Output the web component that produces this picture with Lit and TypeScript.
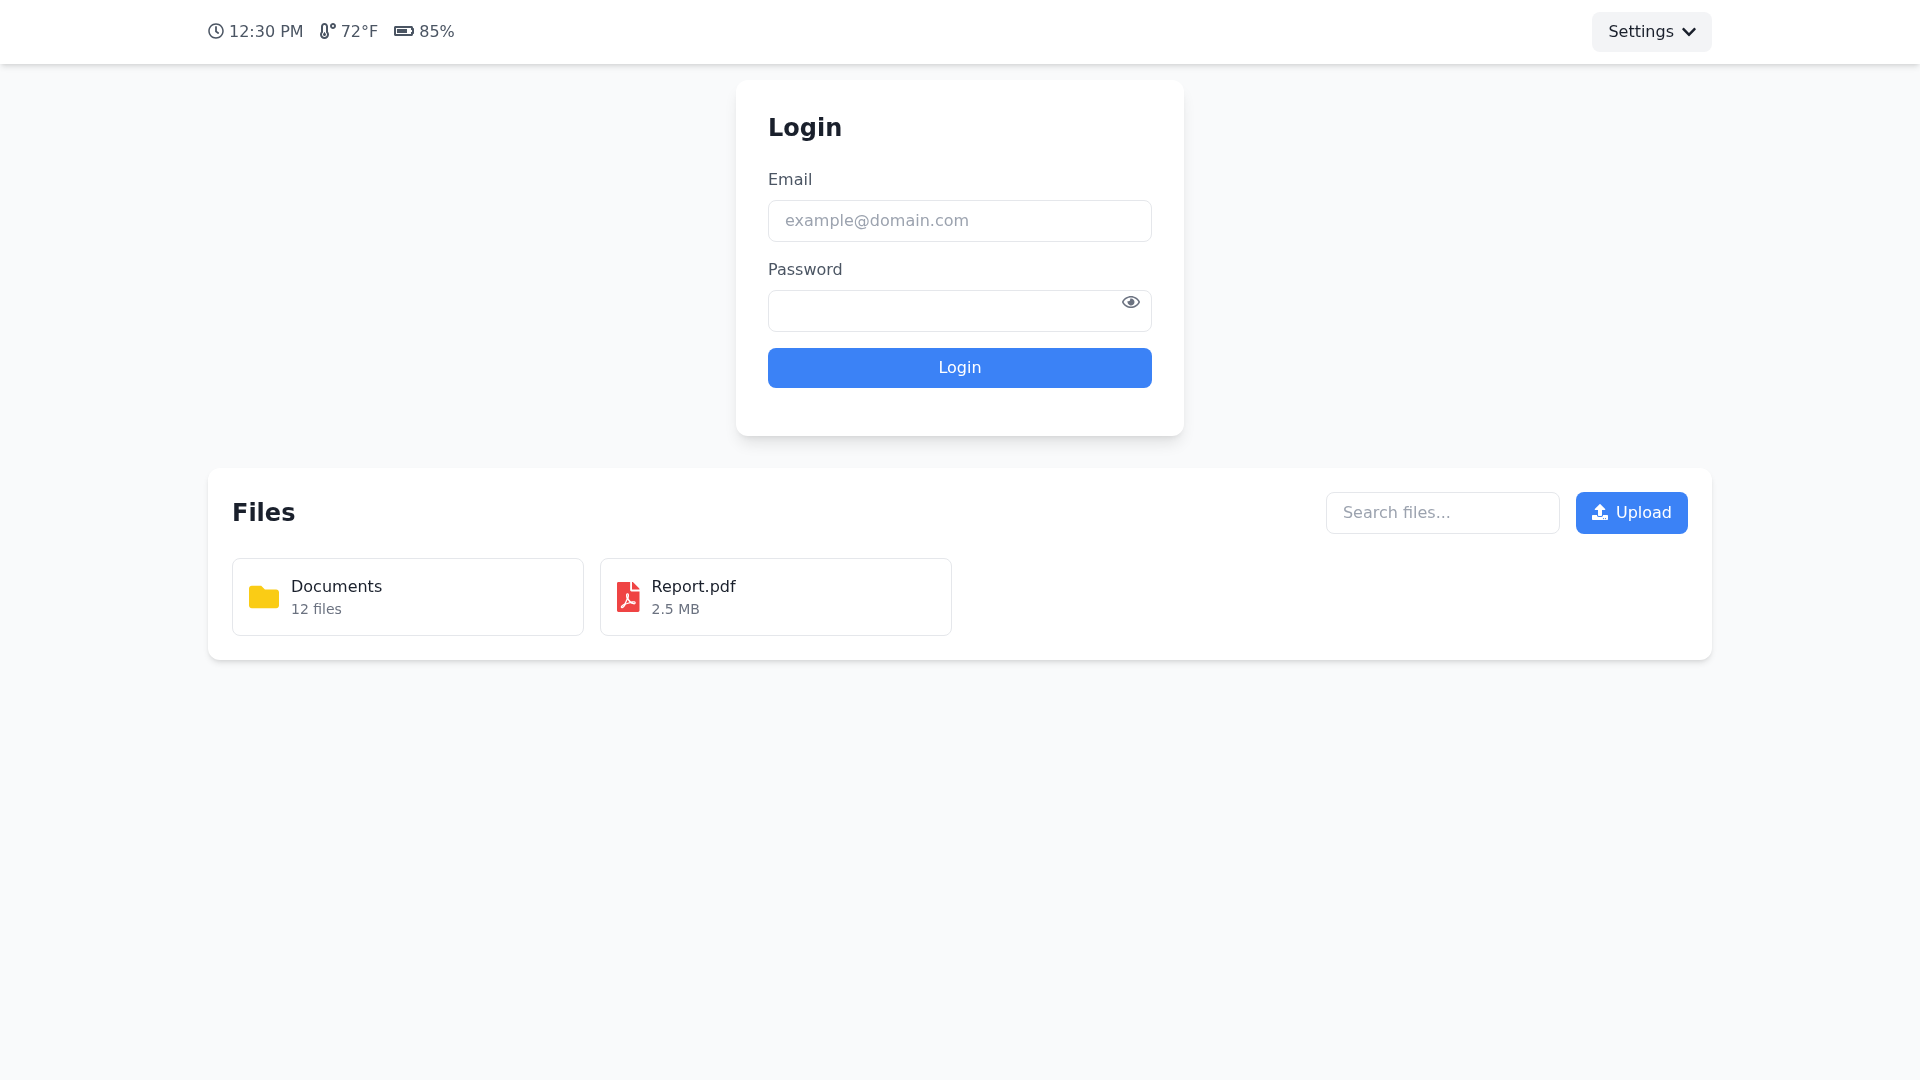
import { LitElement, html, css, svg } from "lit";
import { customElement } from "lit/decorators.js";

// Solid glyphs, all drawn with fill="currentColor"
const icon = (w: number, d: string, cls = "icon") => html`
  <svg class=${cls} viewBox="0 0 ${w} 512" style="width:${(w / 512) * 16}px" aria-hidden="true">
    ${svg`<path fill="currentColor" d=${d}></path>`}
  </svg>
`;

const CLOCK = "M256 8C119 8 8 119 8 256s111 248 248 248 248-111 248-248S393 8 256 8zm0 448c-110.500 0-200-89.500-200-200S145.500 56 256 56s200 89.500 200 200-89.500 200-200 200zm61.800-104.400l-84.900-61.700c-3.100-2.300-4.900-5.900-4.900-9.700V116c0-6.600 5.400-12 12-12h32c6.600 0 12 5.400 12 12v141.700l66.800 48.600c5.400 3.900 6.500 11.400 2.600 16.800L334.600 349c-3.900 5.300-11.400 6.500-16.800 2.600z";
const TEMP = "M416 0c-52.900 0-96 43.100-96 96s43.100 96 96 96 96-43.100 96-96-43.100-96-96-96zm0 128c-17.700 0-32-14.300-32-32s14.300-32 32-32 32 14.300 32 32-14.300 32-32 32zm-160-16C256 50.100 205.900 0 144 0S32 50.100 32 112v166.500C12.300 303.200 0 334 0 368c0 79.500 64.500 144 144 144s144-64.500 144-144c0-34-12.300-64.900-32-89.500V112zM144 448c-44.100 0-80-35.900-80-80 0-25.500 12.200-49 32-63.800V112c0-26.500 21.500-48 48-48s48 21.500 48 48v192.200c19.800 14.700 32 38.300 32 63.800 0 44.100-35.900 80-80 80zm16-125.100V304c0-8.800-7.200-16-16-16s-16 7.200-16 16v18.900c-18.600 6.600-32 24.200-32 45.100 0 26.500 21.500 48 48 48s48-21.500 48-48c0-20.900-13.400-38.500-32-45.100z";
const BATTERY = "M544 160v64h32v64h-32v64H64V160h480m16-64H48c-26.510 0-48 21.490-48 48v224c0 26.510 21.490 48 48 48h512c26.510 0 48-21.490 48-48v-16h8c13.255 0 24-10.745 24-24V184c0-13.255-10.745-24-24-24h-8v-16c0-26.510-21.490-48-48-48zM416 192H96v128h320V192z";
const CHEVRON = "M207.029 381.476L12.686 187.132c-9.373-9.373-9.373-24.569 0-33.941l22.667-22.667c9.357-9.357 24.522-9.375 33.901-.04L224 284.505l154.745-154.021c9.379-9.335 24.544-9.317 33.901.04l22.667 22.667c9.373 9.373 9.373 24.569 0 33.941L240.971 381.476c-9.373 9.372-24.569 9.372-33.942 0z";
const EYE = "M288 144a110.940 110.940 0 0 0-31.240 5 55.400 55.400 0 0 1 7.240 27 56 56 0 0 1-56 56 55.400 55.400 0 0 1-27-7.240A111.710 111.710 0 1 0 288 144zm284.520 97.400C518.290 135.590 410.930 64 288 64S57.680 135.640 3.480 241.410a32.350 32.350 0 0 0 0 29.190C57.710 376.410 165.070 448 288 448s230.320-71.640 284.520-177.410a32.350 32.350 0 0 0 0-29.190zM288 400c-98.650 0-189.090-55-237.930-144C98.910 167 189.340 112 288 112s189.090 55 237.930 144C477.100 345 386.660 400 288 400z";
const UPLOAD = "M296 384h-80c-13.300 0-24-10.700-24-24V192h-87.700c-17.800 0-26.700-21.500-14.100-34.100L242.300 5.700c7.500-7.500 19.800-7.500 27.300 0l152.200 152.200c12.600 12.600 3.700 34.100-14.100 34.100H320v168c0 13.300-10.700 24-24 24zm216-8v112c0 13.300-10.700 24-24 24H24c-13.300 0-24-10.700-24-24V376c0-13.300 10.700-24 24-24h136v8c0 30.900 25.100 56 56 56h80c30.900 0 56-25.100 56-56v-8h136c13.300 0 24 10.700 24 24zm-124 88c0-11-9-20-20-20s-20 9-20 20 9 20 20 20 20-9 20-20zm64 0c0-11-9-20-20-20s-20 9-20 20 9 20 20 20 20-9 20-20z";
const FOLDER = "M464 128H272l-64-64H48C21.490 64 0 85.490 0 112v288c0 26.510 21.490 48 48 48h416c26.510 0 48-21.490 48-48V176c0-26.510-21.490-48-48-48z";
const PDF = "M181.900 256.100c-5-16-4.900-46.900-2-46.900 8.400 0 7.600 36.900 2 46.900zm-1.700 47.200c-7.700 20.200-17.300 43.300-28.400 62.700 18.300-7 39-17.200 62.900-21.900-12.700-9.600-24.900-23.400-34.500-40.800zM86.100 428.100c0 .8 13.200-5.400 34.900-40.200-6.700 6.300-29.100 24.500-34.900 40.200zM248 160h136v328c0 13.300-10.700 24-24 24H24c-13.300 0-24-10.700-24-24V24C0 10.700 10.700 0 24 0h200v136c0 13.200 10.800 24 24 24zm-8 171.800c-20-12.200-33.300-29-42.700-53.800 4.500-18.500 11.600-46.600 6.200-64.200-4.700-29.400-42.400-26.500-47.800-6.800-5 18.300-.4 44.100 8.100 77-11.600 27.600-28.700 64.600-40.800 85.800-.1 0-.1.100-.2.100-27.100 13.900-73.600 44.500-54.500 68 5.600 6.900 16 10 21.500 10 17.900 0 35.700-18 61.100-61.800 25.800-8.500 54.100-19.100 79-23.200 21.700 11.800 47.100 19.500 64 19.500 29.200 0 31.200-32 19.700-43.400-13.900-13.600-54.300-9.700-73.600-7.200zM377 105L279 7c-4.500-4.500-10.600-7-17-7h-6v128h128v-6.100c0-6.300-2.500-12.400-7-16.900zm-74.100 255.300c4.100-2.700-2.500-11.900-42.800-9 37.100 15.800 42.800 9 42.800 9z";

@customElement("app-root")
export class AppRoot extends LitElement {
  static styles = css`
    :host {
      display: block;
      min-height: 100vh;
      background: #f9fafb;
      color: #1a202c;
      font-family: "DejaVu Sans", sans-serif;
      font-size: 16px;
      line-height: 24px;
      will-change: transform; /* gives the grayscale text of the reference */
    }
    * {
      box-sizing: border-box;
    }
    .icon {
      display: block;
      height: 16px;
      flex: none;
    }
    nav {
      background: #fff;
      box-shadow: 0 4px 6px -1px rgba(0, 0, 0, 0.1), 0 2px 4px -2px rgba(0, 0, 0, 0.1);
    }
    .nav-inner {
      max-width: 1536px;
      height: 64px;
      margin: 0 auto;
      padding: 0 16px;
      display: flex;
      align-items: center;
      justify-content: space-between;
    }
    .status {
      display: flex;
      gap: 16px;
      color: #4b5563;
    }
    .status-item {
      display: flex;
      align-items: center;
      gap: 5px;
    }
    .status-item .icon,
    .upload .icon {
      margin-bottom: 2px;
    }
    button {
      font: inherit;
      border: none;
      cursor: pointer;
    }
    .settings {
      display: flex;
      align-items: center;
      gap: 8px;
      height: 40px;
      padding: 8px 16px;
      border-radius: 8px;
      background: #f3f4f6;
      color: #1a202c;
    }
    main {
      max-width: 1536px;
      margin: 0 auto;
      padding: 16px;
    }
    .card {
      background: #fff;
      border-radius: 12px;
    }
    .login {
      width: 448px;
      margin: 0 auto 32px;
      padding: 32px;
      box-shadow: 0 10px 15px -3px rgba(0, 0, 0, 0.1), 0 4px 6px -4px rgba(0, 0, 0, 0.1);
    }
    h2 {
      margin: 0;
      font-size: 24px;
      line-height: 32px;
      font-weight: 700;
    }
    .login h2 {
      margin-bottom: 24px;
    }
    .field {
      margin-bottom: 16px;
    }
    label {
      display: block;
      margin-bottom: 8px;
      color: #4b5563;
    }
    .input-wrap {
      position: relative;
    }
    input {
      display: block;
      width: 100%;
      height: 42px;
      padding: 7px 16px 9px;
      font: inherit;
      line-height: normal;
      color: #1a202c;
      background: #fff;
      border: 1px solid #e5e7eb;
      border-radius: 8px;
      outline: none;
    }
    input::placeholder {
      color: #9ca3af;
    }
    .eye {
      position: absolute;
      top: 0;
      right: 12px;
      height: 24px;
      display: flex;
      align-items: center;
      color: #6b7280;
    }
    .submit {
      display: block;
      width: 100%;
      height: 40px;
      margin-bottom: 16px;
      border-radius: 8px;
      background: #3b82f6;
      color: #fff;
    }
    .files {
      padding: 24px;
      box-shadow: 0 4px 6px -1px rgba(0, 0, 0, 0.1), 0 2px 4px -2px rgba(0, 0, 0, 0.1);
    }
    .files-head {
      display: flex;
      align-items: center;
      justify-content: space-between;
      margin-bottom: 24px;
    }
    .tools {
      display: flex;
      gap: 16px;
    }
    .tools input {
      width: 234px;
    }
    .upload {
      display: flex;
      align-items: center;
      gap: 8px;
      height: 42px;
      padding: 8px 16px;
      border-radius: 8px;
      background: #3b82f6;
      color: #fff;
    }
    .grid {
      display: grid;
      grid-template-columns: repeat(4, 1fr);
      gap: 16px;
    }
    .file {
      display: flex;
      align-items: center;
      gap: 12px;
      padding: 16px;
      border: 1px solid #e5e7eb;
      border-radius: 8px;
    }
    .file-icon {
      display: block;
      height: 30px;
      flex: none;
    }
    .folder {
      color: #facc15;
    }
    .pdf {
      color: #ef4444;
    }
    .size {
      font-size: 14px;
      line-height: 20px;
      color: #6b7280;
    }
  `;

  render() {
    return html`
      <nav>
        <div class="nav-inner">
          <div class="status">
            <div class="status-item">${icon(512, CLOCK)}<span>12:30 PM</span></div>
            <div class="status-item">${icon(512, TEMP)}<span>72°F</span></div>
            <div class="status-item">${icon(640, BATTERY)}<span>85%</span></div>
          </div>
          <button class="settings">Settings ${icon(448, CHEVRON)}</button>
        </div>
      </nav>
      <main>
        <section class="card login">
          <h2>Login</h2>
          <div class="field">
            <label>Email</label>
            <input type="email" placeholder="example@domain.com" />
          </div>
          <div class="field">
            <label>Password</label>
            <div class="input-wrap">
              <input type="password" />
              <span class="eye">${icon(576, EYE)}</span>
            </div>
          </div>
          <button class="submit">Login</button>
        </section>
        <section class="card files">
          <div class="files-head">
            <h2>Files</h2>
            <div class="tools">
              <input type="text" placeholder="Search files..." />
              <button class="upload">${icon(512, UPLOAD)}Upload</button>
            </div>
          </div>
          <div class="grid">
            <div class="file">
              <span class="folder">${this.fileIcon(512, FOLDER)}</span>
              <div>
                <div>Documents</div>
                <div class="size">12 files</div>
              </div>
            </div>
            <div class="file">
              <span class="pdf">${this.fileIcon(384, PDF)}</span>
              <div>
                <div>Report.pdf</div>
                <div class="size">2.5 MB</div>
              </div>
            </div>
          </div>
        </section>
      </main>
    `;
  }

  fileIcon(w: number, d: string) {
    return html`
      <svg class="file-icon" viewBox="0 0 ${w} 512" style="width:${(w / 512) * 30}px" aria-hidden="true">
        ${svg`<path fill="currentColor" d=${d}></path>`}
      </svg>
    `;
  }
}
